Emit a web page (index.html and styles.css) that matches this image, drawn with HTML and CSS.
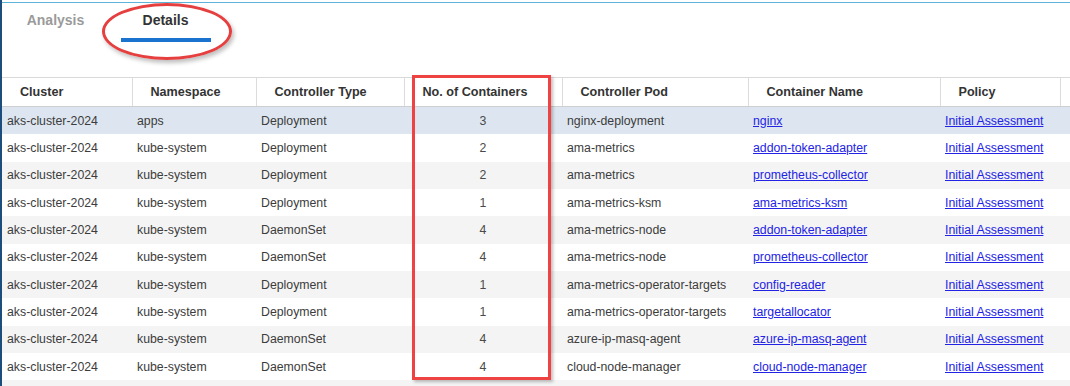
FILE: index.html
```html
<!DOCTYPE html>
<html lang="en">
<head>
<meta charset="utf-8">
<title>Details</title>
<link rel="stylesheet" href="styles.css">
</head>
<body>
<div class="frame">
  <div class="topline"></div>
  <div class="tabs">
    <div class="tab">Analysis</div>
    <div class="tab active">Details</div>
  </div>
  <div class="table-wrap">
    <table class="grid">
      <colgroup>
        <col class="c1"><col class="c2"><col class="c3"><col class="c4"><col class="c5"><col class="c6"><col class="c7"><col class="c8">
      </colgroup>
      <thead>
        <tr>
          <th>Cluster</th><th>Namespace</th><th>Controller Type</th><th>No. of Containers</th><th>Controller Pod</th><th>Container Name</th><th>Policy</th><th></th>
        </tr>
      </thead>
      <tbody>
        <tr class="sel"><td>aks-cluster-2024</td><td>apps</td><td>Deployment</td><td class="num">3</td><td>nginx-deployment</td><td><a href="#">nginx</a></td><td><a href="#">Initial Assessment</a></td><td></td></tr>
        <tr><td>aks-cluster-2024</td><td>kube-system</td><td>Deployment</td><td class="num">2</td><td>ama-metrics</td><td><a href="#">addon-token-adapter</a></td><td><a href="#">Initial Assessment</a></td><td></td></tr>
        <tr class="alt"><td>aks-cluster-2024</td><td>kube-system</td><td>Deployment</td><td class="num">2</td><td>ama-metrics</td><td><a href="#">prometheus-collector</a></td><td><a href="#">Initial Assessment</a></td><td></td></tr>
        <tr><td>aks-cluster-2024</td><td>kube-system</td><td>Deployment</td><td class="num">1</td><td>ama-metrics-ksm</td><td><a href="#">ama-metrics-ksm</a></td><td><a href="#">Initial Assessment</a></td><td></td></tr>
        <tr class="alt"><td>aks-cluster-2024</td><td>kube-system</td><td>DaemonSet</td><td class="num">4</td><td>ama-metrics-node</td><td><a href="#">addon-token-adapter</a></td><td><a href="#">Initial Assessment</a></td><td></td></tr>
        <tr><td>aks-cluster-2024</td><td>kube-system</td><td>DaemonSet</td><td class="num">4</td><td>ama-metrics-node</td><td><a href="#">prometheus-collector</a></td><td><a href="#">Initial Assessment</a></td><td></td></tr>
        <tr class="alt"><td>aks-cluster-2024</td><td>kube-system</td><td>Deployment</td><td class="num">1</td><td>ama-metrics-operator-targets</td><td><a href="#">config-reader</a></td><td><a href="#">Initial Assessment</a></td><td></td></tr>
        <tr><td>aks-cluster-2024</td><td>kube-system</td><td>Deployment</td><td class="num">1</td><td>ama-metrics-operator-targets</td><td><a href="#">targetallocator</a></td><td><a href="#">Initial Assessment</a></td><td></td></tr>
        <tr class="alt"><td>aks-cluster-2024</td><td>kube-system</td><td>DaemonSet</td><td class="num">4</td><td>azure-ip-masq-agent</td><td><a href="#">azure-ip-masq-agent</a></td><td><a href="#">Initial Assessment</a></td><td></td></tr>
        <tr><td>aks-cluster-2024</td><td>kube-system</td><td>DaemonSet</td><td class="num">4</td><td>cloud-node-manager</td><td><a href="#">cloud-node-manager</a></td><td><a href="#">Initial Assessment</a></td><td></td></tr>
        <tr class="alt"><td></td><td></td><td></td><td></td><td></td><td></td><td></td><td></td></tr>
      </tbody>
    </table>
  </div>
  <div class="mark-ellipse"></div>
  <div class="mark-rect"></div>
</div>
</body>
</html>
```

FILE: styles.css
```css
html, body {
  margin: 0;
  padding: 0;
  background: #ffffff;
  overflow: hidden;
}

.frame {
  position: relative;
  height: 386px;
  border-left: 2px solid #1c4d7c;
  overflow: hidden;
  font-family: "Liberation Sans", Arial, sans-serif;
  color: #3a3a3a;
}

.topline {
  margin-top: 2px;
  border-top: 1px solid #5cb5d8;
}

.tabs {
  display: flex;
  gap: 20px;
  padding-left: 8.5px;
  margin-bottom: 35px;
}

.tab {
  width: 90px;
  text-align: center;
  font-size: 14px;
  font-weight: bold;
  line-height: 16px;
  color: #9a9a9a;
  padding-top: 9px;
  padding-bottom: 10px;
  border-bottom: 4px solid transparent;
}

.tab.active {
  color: #333333;
  border-bottom-color: #1a73cf;
}

.table-wrap {
  width: 1200px;
}

.grid {
  border-collapse: collapse;
  table-layout: fixed;
  width: 1158px;
}

.c1 { width: 130px; }
.c2 { width: 124px; }
.c3 { width: 148px; }
.c4 { width: 158px; }
.c5 { width: 186px; }
.c6 { width: 192px; }
.c7 { width: 120px; }
.c8 { width: 100px; }

.grid th {
  height: 28px;
  padding: 0 0 0 18px;
  text-align: left;
  font-size: 12.6px;
  font-weight: bold;
  color: #333333;
  border-top: 1px solid #d9d9d9;
  border-bottom: 1px solid #cfcfcf;
  border-left: 1px solid #dcdcdc;
  white-space: nowrap;
}

.grid th:first-child {
  border-left: none;
}

.grid td {
  height: 27.33px;
  padding: 0 5px;
  font-size: 12.3px;
  color: #3c3c3c;
  white-space: nowrap;
  overflow: hidden;
}

.grid td.num {
  text-align: center;
  color: #4a4a4a;
}

.grid tr.sel td {
  background: #dde6f0;
}

.grid tr.alt td {
  background: #f4f4f4;
}

.grid a {
  color: #2323e6;
  text-decoration: underline;
}

.mark-ellipse {
  position: absolute;
  left: 100px;
  top: 3px;
  width: 124px;
  height: 51px;
  border: 3px solid #e5403f;
  border-radius: 50%;
  box-shadow: 2px 3px 4px rgba(0, 0, 0, 0.25);
}

.mark-rect {
  position: absolute;
  left: 410px;
  top: 75px;
  width: 133px;
  height: 299px;
  border: 3px solid #ef4242;
  box-shadow: 2px 2px 3px rgba(0, 0, 0, 0.25);
}
```
